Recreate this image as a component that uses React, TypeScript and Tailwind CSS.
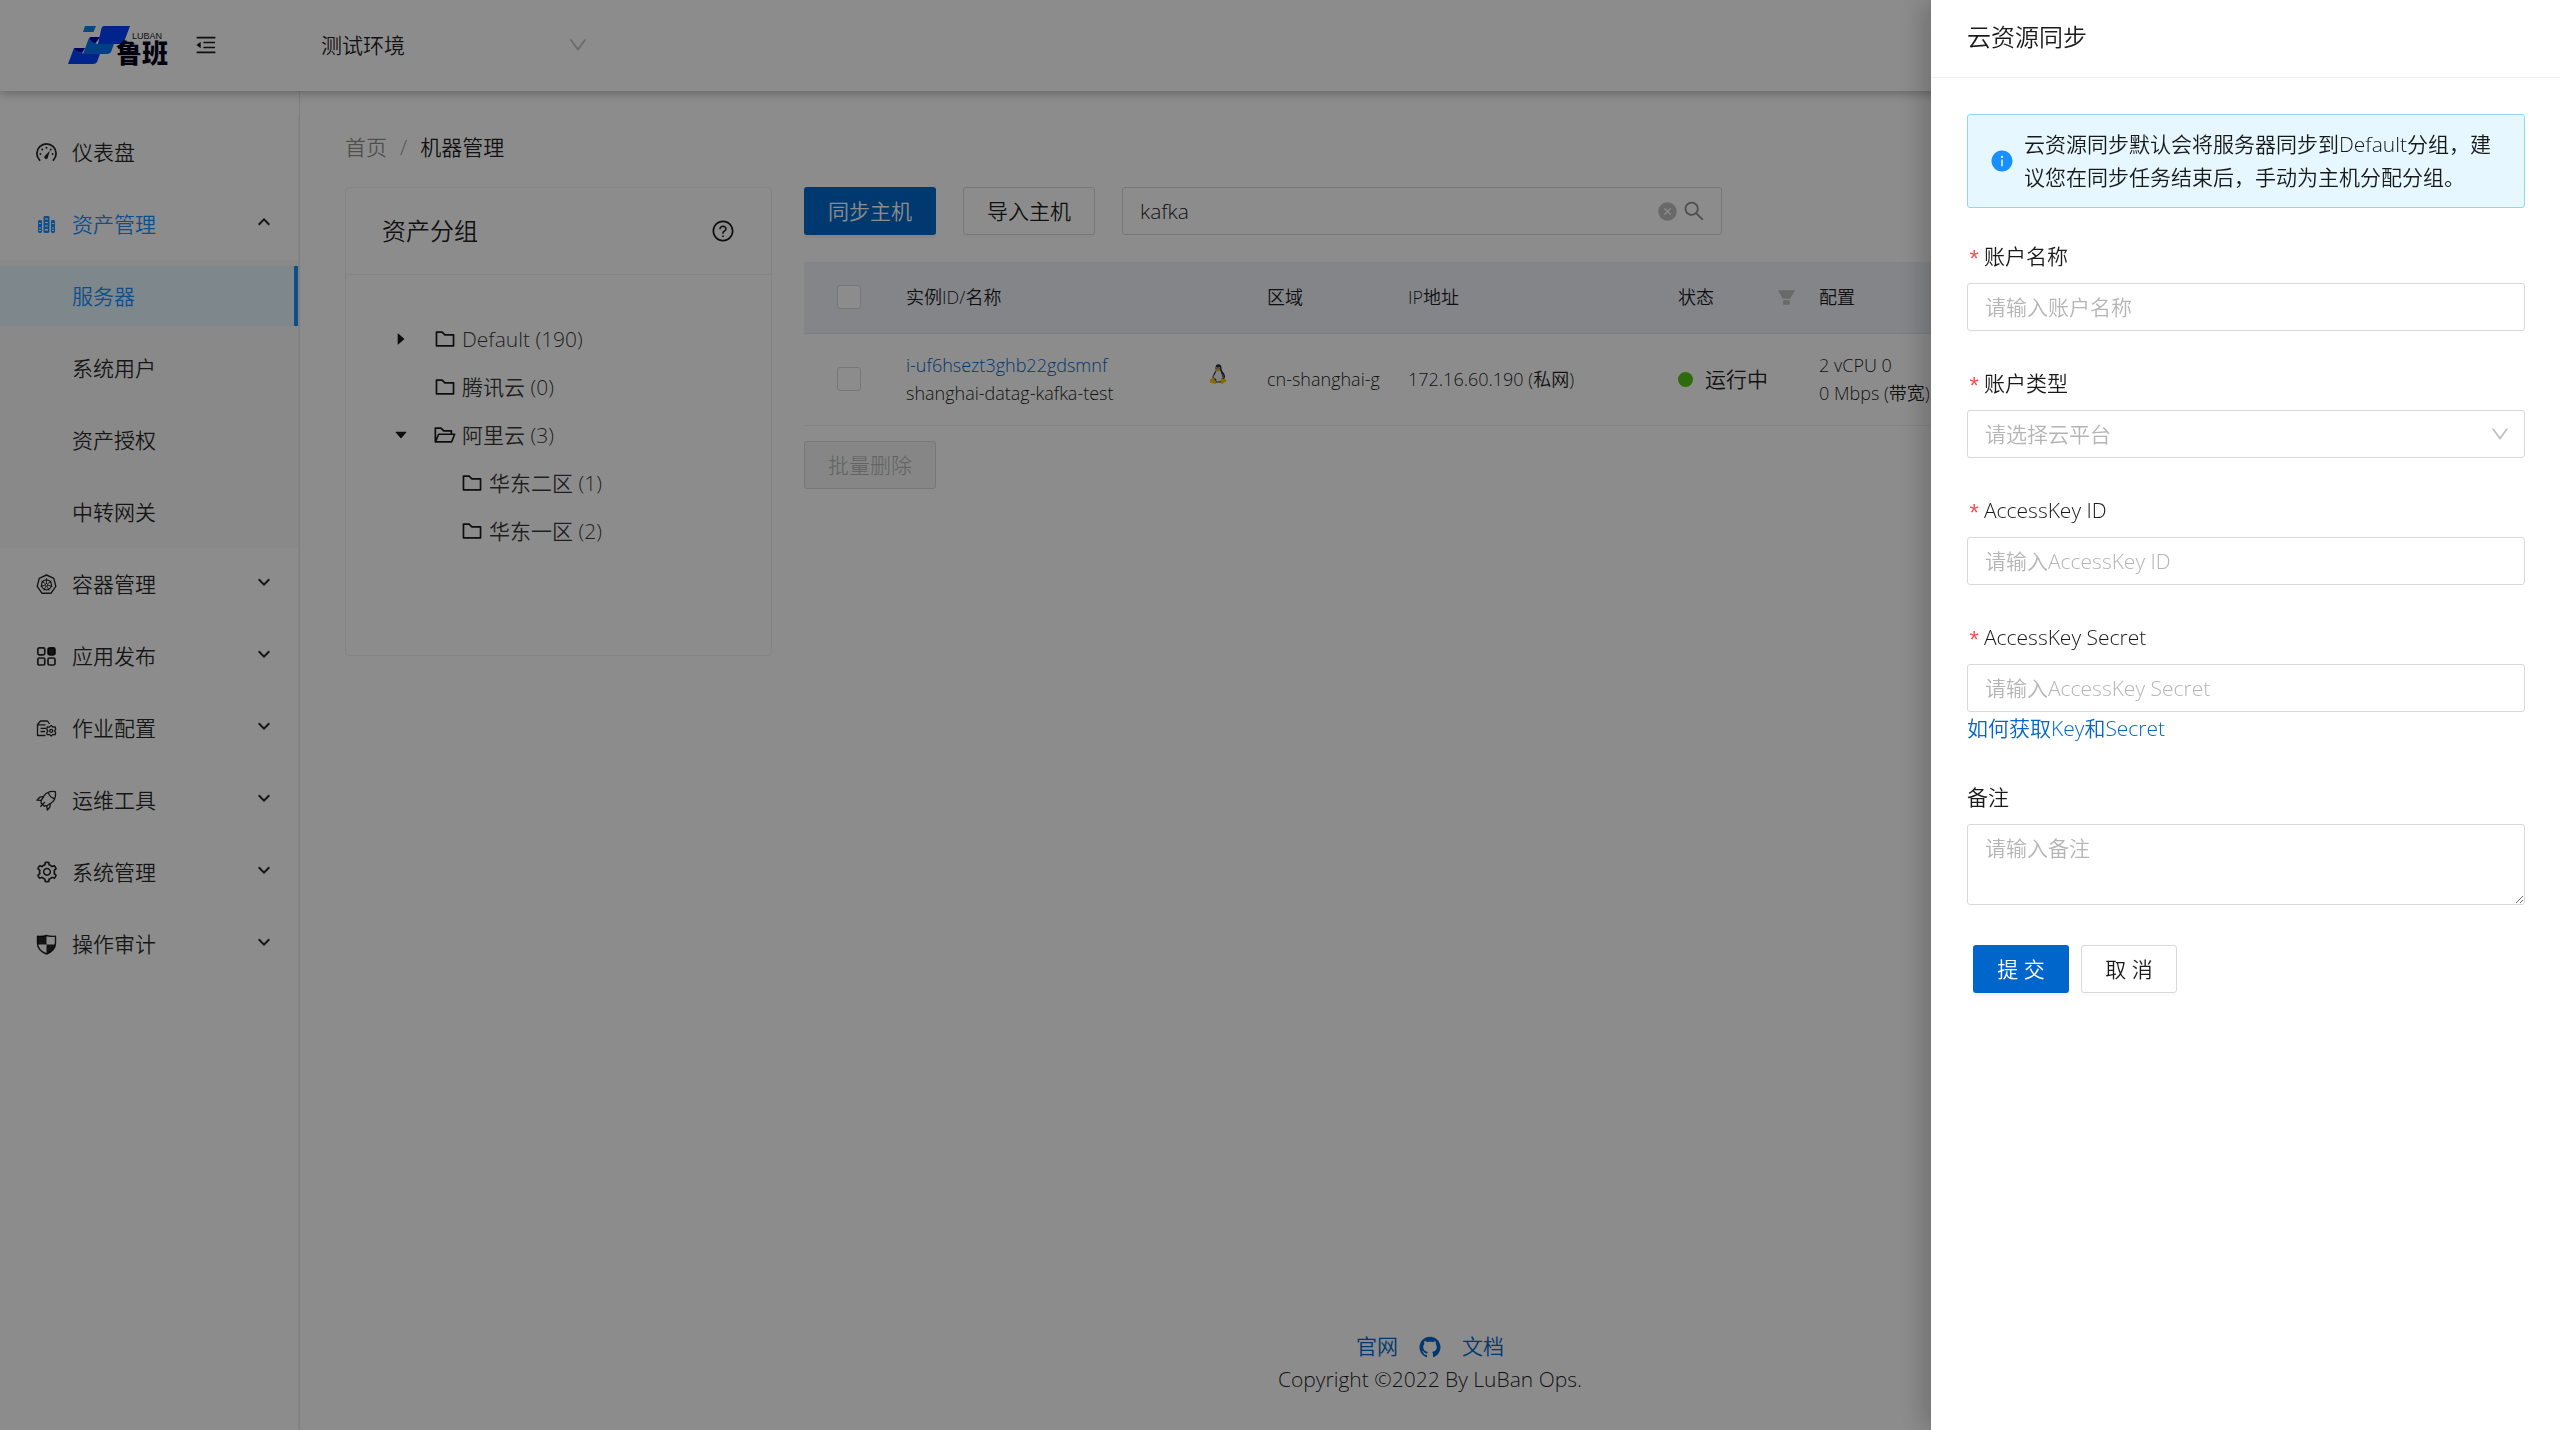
import { useState } from "react";
import type { ReactNode } from "react";
import {
  AiFillCaretDown,
  AiFillCaretRight,
  AiFillCloseCircle,
  AiFillFilter,
  AiFillGithub,
  AiFillInfoCircle,
  AiOutlineDown,
  AiOutlineFolder,
  AiOutlineFolderOpen,
  AiOutlineMenuFold,
  AiOutlineQuestionCircle,
  AiOutlineSearch,
  AiOutlineSetting,
} from "react-icons/ai";
import { FcLinux } from "react-icons/fc";

const DashboardIcon = () => (
  <svg viewBox="0 0 21 21" className="w-[21px] h-[21px]" fill="none" stroke="currentColor" strokeWidth="1.8">
    <path d="M3.6 18.2A9.6 9.6 0 1 1 17.4 18.2" strokeLinecap="round" />
    <g fill="currentColor" stroke="none">
      <circle cx="4.4" cy="12" r="1" />
      <circle cx="6.2" cy="7.6" r="1" />
      <circle cx="10.5" cy="5.7" r="1" />
      <circle cx="14.8" cy="7.6" r="1" />
      <circle cx="16.6" cy="12" r="1" />
      <path d="M14 8.5L11.9 15.2A1.8 1.8 0 1 1 9 13.8Z" />
    </g>
  </svg>
);

const ServerIcon = () => (
  <svg viewBox="0 0 21 21" className="w-[21px] h-[21px]" fill="currentColor">
    <rect x="2" y="6" width="4" height="13" rx="1.4" />
    <rect x="7.5" y="2" width="6" height="17" rx="1.4" />
    <rect x="15" y="6" width="4" height="13" rx="1.4" />
    <g fill="#fff">
      <rect x="3" y="9" width="2" height="1" />
      <rect x="3" y="13.5" width="2" height="1" />
      <rect x="3" y="16" width="2" height="1" />
      <rect x="9" y="4.5" width="3" height="1" />
      <rect x="9" y="8" width="3" height="1" />
      <rect x="9" y="11.5" width="3" height="1" />
      <rect x="9" y="15" width="3" height="1.5" />
      <rect x="16" y="9" width="2" height="1" />
      <rect x="16" y="13.5" width="2" height="1" />
      <rect x="16" y="16" width="2" height="1" />
    </g>
  </svg>
);

const KubernetesIcon = () => (
  <svg viewBox="0 0 21 21" className="w-[21px] h-[21px]" fill="none" stroke="currentColor">
    <path d="M10.5 1L17.8 4.4 19.8 12.4 14.9 19.3H6.1L1.2 12.4 3.2 4.4Z" strokeWidth="1.4" strokeLinejoin="round" />
    <circle cx="10.5" cy="10.8" r="5" strokeWidth="1.2" />
    <circle cx="10.5" cy="10.8" r="1.2" strokeWidth="0.8" />
    <path
      d="M10.5 9.6V4.2M11.5 10L15.5 6.8M11.8 11.2L16.6 12.3M11 12.1L13.2 16.6M10 12.1L7.8 16.6M9.2 11.2L4.4 12.3M9.5 10L5.5 6.8"
      strokeWidth="0.9"
    />
  </svg>
);

const AppIcon = () => (
  <svg viewBox="0 0 21 21" className="w-[21px] h-[21px]" fill="none" stroke="currentColor" strokeWidth="1.7">
    <rect x="1.8" y="1.8" width="7" height="7" rx="1.6" />
    <rect x="12" y="1.8" width="7" height="7" rx="1.6" fill="currentColor" />
    <rect x="1.8" y="12" width="7" height="7" rx="1.6" />
    <rect x="12" y="12" width="7" height="7" rx="1.6" />
  </svg>
);

const JobIcon = () => (
  <svg viewBox="0 0 21 21" className="w-[21px] h-[21px]" fill="none" stroke="currentColor" strokeWidth="1.3">
    <path d="M9.5 17.5H1.5V6.5L4.5 3H11.5L13.5 6M1.5 6.8H9.5M4.5 10.3H10M4.5 13.5H9" strokeLinejoin="round" />
    <path d="M15.2 7.6l1.7 1.5 2.3-.2.5 2.3-1.2 1.7 1.2 1.7-.5 2.1-2.3-.1-1.7 1.4-1.7-1.4-2.3.1-.5-2.1 1.2-1.7-1.2-1.7.5-2.3 2.3.2Z" strokeLinejoin="round" />
    <circle cx="15.2" cy="12.9" r="1.5" />
  </svg>
);

const RocketIcon = () => (
  <svg viewBox="0 0 21 21" className="w-[21px] h-[21px]" fill="none" stroke="currentColor" strokeWidth="1.3" strokeLinejoin="round">
    <path d="M19.3 1.7C14.5.8 10.5 2.5 8 5.8L5.3 10.3 5 13 8 16 10.7 15.7 15.2 13C18.5 10.5 20.2 6.5 19.3 1.7Z" />
    <path d="M12.5 2.8C13.3 5.8 15.2 7.7 18.4 8.5M7.3 6.7L3.8 7.2.9 10.2 5.3 10.3M14.3 13.7L13.8 17.2 11.3 20 10.7 15.7M9 12L4.3 16.7" />
  </svg>
);

const ShieldIcon = () => (
  <svg viewBox="0 0 21 21" className="w-[21px] h-[21px]" fill="none" stroke="currentColor" strokeWidth="1.4">
    <path d="M1.5 2.3Q6.5 2.6 10.5 1.5 14.5 2.6 19.5 2.3V9Q19.5 16.5 10.5 20 1.5 16.5 1.5 9Z" strokeLinejoin="round" />
    <path d="M1.5 2.3Q6.5 2.6 10.5 1.5V10.5H1.5ZM10.5 10.5H19.4Q18.5 16.8 10.5 20Z" fill="currentColor" stroke="none" />
  </svg>
);

const Logo = () => (
  <svg viewBox="0 -6 104 52" className="w-[104px] h-[52px]" role="img" aria-label="LuBan">
    <path d="M17 1H28L25.5 7H15Z" fill="#0b84f0" />
    <path d="M36 1H62L56 17Q55 19 53 19H30L33 5Q34 1 36 1Z" fill="#0042ff" />
    <path d="M22 12H32L27 19H19Z" fill="#0000b0" />
    <path d="M21 13Q24 18 30 19H46L43 27Q42 29 39 29H15Z" fill="#0074ee" />
    <path d="M6 23Q9 28 18 29H32L29 37Q28 39 25 39H0Z" fill="#0042ff" />
    <path d="M6 23H17L14 28Q8 27 6 23Z" fill="#0000b0" />
    <text x="64" y="14" fontSize="9" fill="#222" className="font-['Liberation_Sans']">LUBAN</text>
    <text x="48" y="38" fontSize="26" fontWeight="900" fill="#06061c" className="font-['Noto_Sans_CJK_SC']">鲁班</text>
  </svg>
);

type MenuEntry = { label: string; icon: ReactNode; active?: boolean; children?: string[]; leaf?: boolean };

const menu: MenuEntry[] = [
  { label: "仪表盘", icon: <DashboardIcon />, leaf: true },
  { label: "资产管理", icon: <ServerIcon />, active: true, children: ["服务器", "系统用户", "资产授权", "中转网关"] },
  { label: "容器管理", icon: <KubernetesIcon /> },
  { label: "应用发布", icon: <AppIcon /> },
  { label: "作业配置", icon: <JobIcon /> },
  { label: "运维工具", icon: <RocketIcon /> },
  { label: "系统管理", icon: <AiOutlineSetting className="w-6 h-6" /> },
  { label: "操作审计", icon: <ShieldIcon /> },
];

const Chevron = ({ up }: { up?: boolean }) => (
  <svg viewBox="0 0 12 8" className="w-3 h-2 ml-auto mb-1 text-black/85" fill="none" stroke="currentColor" strokeWidth="2">
    <path d={up ? "M0.7 6.7L6 1.4 11.3 6.7" : "M0.7 1.3L6 6.6 11.3 1.3"} />
  </svg>
);

const Sidebar = () => (
  <aside className="w-[300px] shrink-0 border-r border-gray-200 pt-[25px]">
    <nav className="h-full border-r border-[#f0f0f0]">
      {menu.map((item) => (
        <div key={item.label}>
          <div className="py-1.5">
            <a
              href="#"
              className={`flex items-center h-15 pl-[34px] pr-7 gap-[13px] ${item.active ? "text-[#1890ff]" : "text-black/85"}`}
            >
              <span className="w-[25px] flex justify-center">{item.icon}</span>
              <span>{item.label}</span>
              {!item.leaf && <Chevron up={item.active} />}
            </a>
          </div>
          {item.children && (
            <ul className="bg-[#fafafa]">
              {item.children.map((child, i) => (
                <li key={child} className="py-1.5">
                  <a
                    href="#"
                    className={`flex items-center h-15 pl-[72px] ${
                      i === 0 ? "bg-[#e6f7ff] text-[#1890ff] border-r-4 border-[#1890ff]" : "text-black/85"
                    }`}
                  >
                    {child}
                  </a>
                </li>
              ))}
            </ul>
          )}
        </div>
      ))}
    </nav>
  </aside>
);

const TopBar = () => (
  <header className="relative z-10 flex items-center h-[91px] pl-[68px] pb-0.5 shadow-[0_2px_10px_rgba(0,0,0,0.3)] bg-white">
    <Logo />
    <button type="button" aria-label="menu" className="ml-[22px]">
      <AiOutlineMenuFold className="w-6 h-6" />
    </button>
    <div className="relative ml-[103px] w-[268px]">
      <select aria-label="环境" className="appearance-none w-full bg-transparent outline-none h-12">
        <option>测试环境</option>
      </select>
      <AiOutlineDown className="absolute right-0 top-[13px] w-[22px] h-[22px] text-black/25 pointer-events-none" />
    </div>
  </header>
);

const tree = [
  { label: "Default (190)", state: "closed", depth: 0 },
  { label: "腾讯云 (0)", state: "none", depth: 0 },
  { label: "阿里云 (3)", state: "open", depth: 0 },
  { label: "华东二区 (1)", state: "none", depth: 1 },
  { label: "华东一区 (2)", state: "none", depth: 1 },
];

const GroupCard = () => (
  <section className="w-[427px] h-[469px] shrink-0 border border-[#f0f0f0] rounded-sm">
    <div className="flex items-center justify-between h-[87px] px-9 border-b border-[#f0f0f0]">
      <h2 className="text-2xl">资产分组</h2>
      <AiOutlineQuestionCircle className="w-6 h-6" />
    </div>
    <ul className="px-9 pt-10">
      {tree.map((node) => (
        <li key={node.label} className={`flex items-center h-12 ${node.depth ? "pl-[27px]" : ""}`}>
          <span className="w-9 ml-px mr-3.5 flex justify-center">
            {node.state === "closed" && <AiFillCaretRight className="w-4 h-4" />}
            {node.state === "open" && <AiFillCaretDown className="w-4 h-4" />}
          </span>
          {node.state === "open" ? (
            <AiOutlineFolderOpen className="w-6 h-6 mr-[5px]" />
          ) : (
            <AiOutlineFolder className="w-6 h-6 mr-[5px]" />
          )}
          <span className="text-black/80">{node.label}</span>
        </li>
      ))}
    </ul>
  </section>
);

const Toolbar = () => {
  const [keyword, setKeyword] = useState("kafka");
  return (
    <div className="flex items-center gap-[27px]">
      <button type="button" className="w-[132px] h-12 rounded-[3px] bg-[#0066cc] text-white shadow-[0_3px_0_rgba(0,0,0,0.045)]">
        同步主机
      </button>
      <button type="button" className="w-[132px] h-12 rounded-[3px] border border-[#d9d9d9] shadow-[0_3px_0_rgba(0,0,0,0.015)]">
        导入主机
      </button>
      <div className="flex items-center w-[600px] h-12 pl-[17px] pr-[15px] gap-1 border border-[#d9d9d9] rounded-[3px]">
        <input
          aria-label="搜索"
          className="flex-1 min-w-0 outline-none"
          value={keyword}
          onChange={(e) => setKeyword(e.target.value)}
        />
        <button type="button" aria-label="清空" onClick={() => setKeyword("")}>
          <AiFillCloseCircle className="w-[21px] h-[21px] text-black/25" />
        </button>
        <AiOutlineSearch className="w-6 h-6 text-black/45" />
      </div>
    </div>
  );
};

const Check = ({ label }: { label: string }) => (
  <input
    type="checkbox"
    aria-label={label}
    className="block mx-auto appearance-none w-6 h-6 border border-[#d9d9d9] rounded-[3px] bg-white"
  />
);

const HostTable = () => (
  <table className="mt-[27px] w-full table-fixed text-lg leading-7 text-left">
    <colgroup>
      <col className="w-[90px]" />
      <col className="w-[361px]" />
      <col className="w-[141px]" />
      <col className="w-[270px]" />
      <col className="w-[141px]" />
      <col />
    </colgroup>
    <thead>
      <tr className="h-[71px] bg-[#eff2fa] border-b border-[#e3e6ee]">
        <th><Check label="全选" /></th>
        <th className="font-[350] px-3">实例ID/名称</th>
        <th className="font-[350] px-3">区域</th>
        <th className="font-[350] px-3">IP地址</th>
        <th className="font-[350] pl-3 pr-2.5">
          <div className="flex items-center justify-between">
            状态
            <AiFillFilter className="w-[21px] h-[21px] text-[#bfbfbf]" />
          </div>
        </th>
        <th className="font-[350] px-3">配置</th>
      </tr>
    </thead>
    <tbody>
      <tr className="h-[92px] border-b border-[#f0f0f0]">
        <td><Check label="选择主机" /></td>
        <td className="px-3">
          <div className="flex items-center justify-between pr-3">
            <div>
              <a href="#" className="text-[#0066cc]">i-uf6hsezt3ghb22gdsmnf</a>
              <div>shanghai-datag-kafka-test</div>
            </div>
            <FcLinux className="w-[26px] h-[26px] mb-2.5" />
          </div>
        </td>
        <td className="px-3">cn-shanghai-g</td>
        <td className="px-3">172.16.60.190 (私网)</td>
        <td className="px-3 text-[21px]">
          <div className="flex items-center gap-3">
            <span className="w-[15px] h-[15px] rounded-full bg-[#52c41a]" />
            运行中
          </div>
        </td>
        <td className="px-3">
          <div>2 vCPU 0</div>
          <div>0 Mbps (带宽)</div>
        </td>
      </tr>
    </tbody>
  </table>
);

const Footer = () => (
  <footer className="mt-auto pb-[34px] text-center leading-[33px]">
    <div className="flex items-center justify-center gap-5 text-[#0066cc]">
      <a href="#">官网</a>
      <a href="#" aria-label="GitHub"><AiFillGithub className="w-6 h-6" /></a>
      <a href="#">文档</a>
    </div>
    <p>Copyright ©2022 By LuBan Ops.</p>
  </footer>
);

const fieldClass =
  "block w-full h-12 px-[17px] border border-[#d9d9d9] rounded-[3px] bg-white outline-none placeholder:text-[#b5b5b5]";

const Field = ({ id, label, required, children }: { id: string; label: string; required?: boolean; children: ReactNode }) => (
  <div className="mb-9">
    <label htmlFor={id} className="flex items-center h-8 mb-[11px]">
      {required && <span className="mr-1 pt-3 w-[13px] text-[#ff4d4f] font-['Liberation_Mono'] text-2xl leading-none">*</span>}
      {label}
    </label>
    {children}
  </div>
);

const SyncDrawer = () => (
  <div role="dialog" aria-label="云资源同步" className="fixed z-30 inset-y-0 right-0 w-[629px] bg-white shadow-[-9px_0_24px_rgba(0,0,0,0.2)]">
    <div className="flex items-center h-[78px] px-9 pb-1 border-b border-[#f0f0f0]">
      <h2 className="text-2xl">云资源同步</h2>
    </div>
    <form className="pl-9 pr-[35px] pt-9" onSubmit={(e) => e.preventDefault()}>
      <div className="flex items-center gap-2.5 mb-8 py-[13px] px-[22px] bg-[#e6f7ff] border border-[#91d5ff] rounded-[3px] leading-[33px]">
        <AiFillInfoCircle className="shrink-0 w-6 h-6 text-[#1890ff]" />
        <p className="flex-1">云资源同步默认会将服务器同步到Default分组，建议您在同步任务结束后，手动为主机分配分组。</p>
      </div>
      <Field id="name" label="账户名称" required>
        <input id="name" className={fieldClass} placeholder="请输入账户名称" />
      </Field>
      <Field id="type" label="账户类型" required>
        <div className="relative">
          <select id="type" defaultValue="" className={`${fieldClass} appearance-none text-[#b5b5b5]`}>
            <option value="">请选择云平台</option>
          </select>
          <AiOutlineDown className="absolute right-3.5 top-[13px] w-[22px] h-[22px] text-black/25 pointer-events-none" />
        </div>
      </Field>
      <Field id="key" label="AccessKey ID" required>
        <input id="key" className={fieldClass} placeholder="请输入AccessKey ID" />
      </Field>
      <Field id="secret" label="AccessKey Secret" required>
        <input id="secret" className={fieldClass} placeholder="请输入AccessKey Secret" />
        <a href="#" className="block leading-[33px] text-[#0066cc]">如何获取Key和Secret</a>
      </Field>
      <Field id="remark" label="备注">
        <textarea id="remark" className={`${fieldClass} h-[81px] py-[7px] leading-[33px]`} placeholder="请输入备注" />
      </Field>
      <div className="flex gap-3 pl-1.5 pt-1">
        <button type="submit" className="w-24 h-12 rounded-[3px] bg-[#0066cc] text-white shadow-[0_3px_0_rgba(0,0,0,0.045)]">提 交</button>
        <button type="button" className="w-24 h-12 rounded-[3px] border border-[#d9d9d9] shadow-[0_3px_0_rgba(0,0,0,0.015)]">取 消</button>
      </div>
    </form>
  </div>
);

const App = () => {
  return (
    <div className="min-h-screen flex flex-col bg-white font-['Open_Sans','Noto_Sans_CJK_SC',sans-serif] font-[350] text-[21px] leading-8 text-black/90">
      <TopBar />
      <div className="flex-1 flex">
        <Sidebar />
        <main className="flex-1 min-w-0 flex flex-col px-[45px] pt-10">
          <nav className="flex gap-[13px] mb-6">
            <a href="#" className="text-black/45">首页</a>
            <span className="text-black/45">/</span>
            <span>机器管理</span>
          </nav>
          <div className="flex items-start gap-8">
            <GroupCard />
            <div className="flex-1 min-w-0">
              <Toolbar />
              <HostTable />
              <button type="button" disabled className="mt-[15px] w-[132px] h-12 rounded-[3px] border border-[#d9d9d9] bg-[#f5f5f5] text-black/25">
                批量删除
              </button>
            </div>
          </div>
          <Footer />
        </main>
      </div>
      <div className="fixed z-20 inset-0 bg-black/45" />
      <SyncDrawer />
    </div>
  );
};

export default App;
